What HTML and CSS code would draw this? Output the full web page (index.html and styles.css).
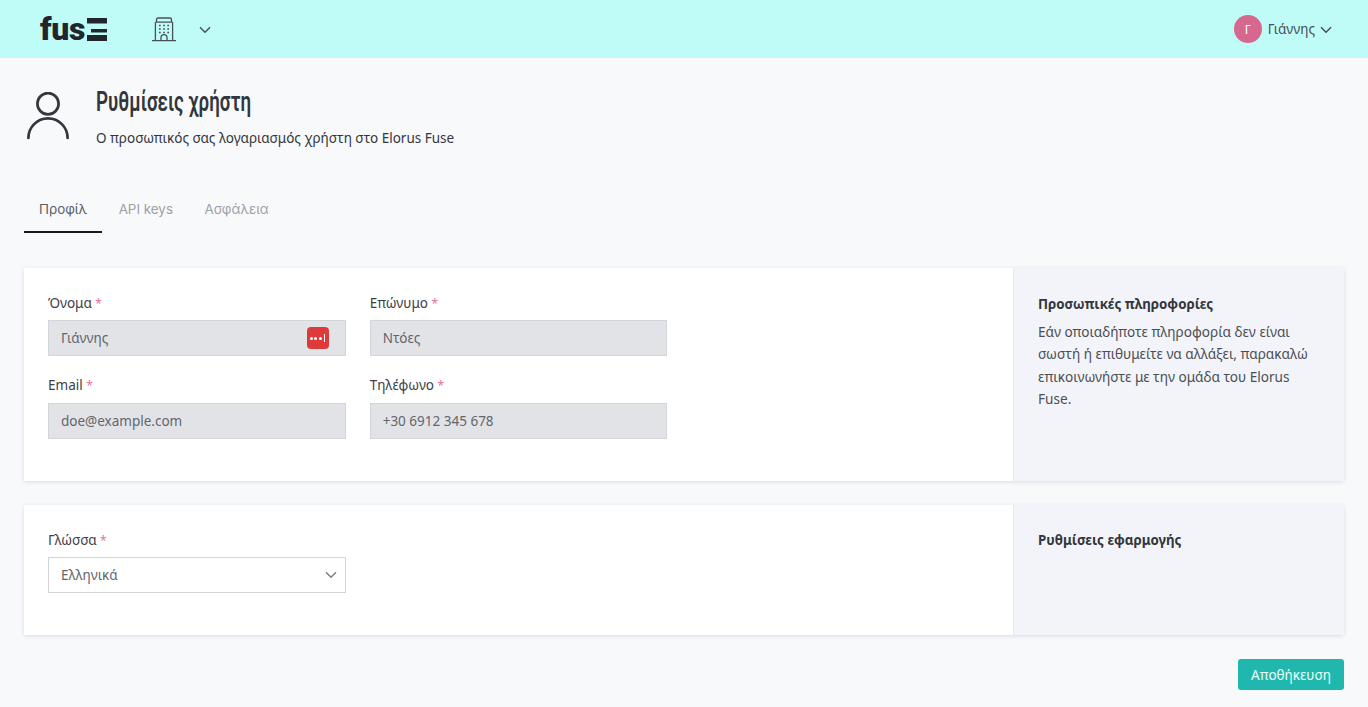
FILE: index.html
```html
<!DOCTYPE html>
<html lang="el">
<head>
<meta charset="utf-8">
<title>Ρυθμίσεις χρήστη</title>
<link rel="stylesheet" href="styles.css">
</head>
<body>
<header class="topbar">
  <div class="logo"><span class="logo-text">fus</span><svg class="logo-e" width="20" height="23" viewBox="0 0 20 23"><path d="M0 0h20v5.5H0zM4 11h16v3.5H4zM0 17h20v6H0z" fill="#22252b"/></svg></div>
  <svg class="building" width="24" height="25" viewBox="0 0 24 25" fill="none" stroke="#4a4f57" stroke-width="1.3">
    <path d="M0 23.6h24M3.4 23.6V5.2M20.6 23.6V5.2M3.4 5.2h17.2M4.5 5.2V2.6q0-1.6 1.6-1.6h11.8q1.6 0 1.6 1.6v2.6"/>
    <path d="M9 23.6v-3a3 3 0 0 1 6 0v3"/>
    <path d="M7 8.5h1.7M11.2 8.5h1.7M15.3 8.5H17M7 12h1.7M11.2 12h1.7M15.3 12H17M7 15.5h1.7M11.2 15.5h1.7M15.3 15.5H17" stroke-width="1.7"/>
  </svg>
  <svg class="caret caret-org" width="12" height="8" viewBox="0 0 12 8" fill="none" stroke="#4a4f57" stroke-width="1.5"><path d="M1 1.2l5 5 5-5"/></svg>
  <div class="user">
    <span class="avatar">Γ</span>
    <span class="user-name">Γιάννης</span>
    <svg class="caret" width="12" height="8" viewBox="0 0 12 8" fill="none" stroke="#4a4f57" stroke-width="1.5"><path d="M1 1.2l5 5 5-5"/></svg>
  </div>
</header>
<main class="page">
  <section class="page-head">
    <svg class="user-icon" width="46" height="50" viewBox="0 0 46 50" fill="none" stroke="#33363c" stroke-width="2.7" stroke-linecap="round"><circle cx="24" cy="11.7" r="10.6"/><path d="M4.4 46a19.6 19.6 0 0 1 39.2 0"/></svg>
    <div class="head-text">
      <h1 class="title">Ρυθμίσεις χρήστη</h1>
      <p class="subtitle">Ο προσωπικός σας λογαριασμός χρήστη στο Elorus Fuse</p>
    </div>
  </section>
  <nav class="tabs">
    <a class="tab tab-active">Προφίλ</a>
    <a class="tab">API keys</a>
    <a class="tab">Ασφάλεια</a>
  </nav>
  <section class="card">
    <div class="card-main">
      <div class="form-grid">
        <div class="field">
          <label class="label">Όνομα <span class="req">*</span></label>
          <div class="input input-disabled">Γιάννης
            <span class="pw-badge"><i></i><i></i><i></i><b></b></span>
          </div>
        </div>
        <div class="field">
          <label class="label">Επώνυμο <span class="req">*</span></label>
          <div class="input input-disabled">Ντόες</div>
        </div>
        <div class="field field-start">
          <label class="label">Email <span class="req">*</span></label>
          <div class="input input-disabled">doe@example.com</div>
        </div>
        <div class="field">
          <label class="label">Τηλέφωνο <span class="req">*</span></label>
          <div class="input input-disabled">+30 6912 345 678</div>
        </div>
      </div>
    </div>
    <aside class="card-side">
      <h2 class="side-title">Προσωπικές πληροφορίες</h2>
      <p class="side-text">Εάν οποιαδήποτε πληροφορία δεν είναι σωστή ή επιθυμείτε να αλλάξει, παρακαλώ επικοινωνήστε με την ομάδα του Elorus Fuse.</p>
    </aside>
  </section>
  <section class="card">
    <div class="card-main">
      <div class="form-grid">
        <div class="field">
          <label class="label">Γλώσσα <span class="req">*</span></label>
          <div class="input input-select">Ελληνικά
            <svg width="12" height="8" viewBox="0 0 12 8" fill="none" stroke="#777b82" stroke-width="1.4"><path d="M1 1.2l5 5 5-5"/></svg>
          </div>
        </div>
      </div>
    </div>
    <aside class="card-side card-side-short">
      <h2 class="side-title">Ρυθμίσεις εφαρμογής</h2>
    </aside>
  </section>
  <div class="actions"><button class="btn-save" type="button">Αποθήκευση</button></div>
</main>
</body>
</html>
```
FILE: styles.css
```css
* { box-sizing: border-box; }
html, body { margin: 0; height: 100%; }
body {
  background: #f8f9fb;
  color: #33363c;
  font-family: "Noto Sans", Roboto, sans-serif;
  font-size: 13.5px;
  overflow: hidden;
}
.topbar {
  height: 58px;
  background: #bffcf8;
  display: flex;
  align-items: center;
  padding: 0 36px 0 40px;
}
.logo { display: flex; align-items: center; width: 112px; }
.logo-text {
  font-family: Roboto, sans-serif;
  font-weight: 900;
  font-size: 32px;
  line-height: 30px;
  letter-spacing: -0.3px;
  color: #22252b;
}
.logo-e { margin-left: 2px; }
.caret-org { margin-left: 23px; margin-top: 1px; }
.user { margin-left: auto; display: flex; align-items: center; }
.user .caret { margin-top: 1px; }
.avatar {
  width: 28px; height: 28px; border-radius: 50%;
  background: #d6688f; color: #fff;
  font-size: 12px;
  display: flex; align-items: center; justify-content: center;
}
.user-name { margin-left: 6px; margin-right: 5px; color: #4a4f57; }
.page { padding: 0 24px; }
.page-head { display: flex; padding-top: 34px; height: 118px; }
.head-text { margin-left: 26px; }
.title {
  margin: -2px 0 0;
  font-family: Roboto, sans-serif;
  font-size: 27px;
  line-height: 24px;
  font-weight: 600;
  color: #33363c;
  transform: scaleX(0.695);
  transform-origin: left center;
  white-space: nowrap;
}
.subtitle { margin: 13px 0 0; line-height: 22px; }
.tabs { display: flex; height: 42px; margin-top: 15px; }
.tab {
  padding: 7px 14.5px 0 15px; color: #9ea1a7; line-height: 22px; height: 42px; margin-right: 2px;
  font-family: Inter, sans-serif; font-size: 13.4px;
}
.tab-active { color: #5a5e65; border-bottom: 2px solid #17191d; }
.card {
  display: flex;
  margin-top: 24px;
  box-shadow: 0 1px 4px rgba(40, 50, 70, 0.14);
  background: #fff;
}
.page > .tabs + .card { margin-top: 35px; }
.card-main { flex: 1; padding: 24px 24px 42px; }
.card-side {
  width: 331px;
  padding: 24px;
  background: #f3f4f9;
  border-left: 1px solid #e8e9ee;
}
.card-side-short { padding-top: 23px; }
.form-grid { display: grid; grid-template-columns: repeat(3, 1fr); column-gap: 24px; row-gap: 19px; }
.form-grid .field-start { grid-column: 1; }
.label { display: block; line-height: 22px; height: 22px; margin-bottom: 6px; color: #3d4046; }
.field:nth-child(n+3) .label { margin-top: -1px; margin-bottom: 7px; }
.req { color: #e8709a; font-size: 12px; line-height: 1; }
.input {
  height: 36px;
  padding: 0 12px;
  border: 1px solid #d3d5da;
  display: flex; align-items: center; justify-content: space-between;
  color: #62666d;
}
.input-disabled { background: #e2e3e7; }
.input-select { background: #fff; padding-right: 8px; }
.pw-badge {
  width: 22px; height: 22px; border-radius: 4px;
  background: #dd3b3b;
  display: flex; align-items: center; justify-content: center; gap: 1.5px;
  margin-right: 4px;
}
.pw-badge i { width: 3px; height: 3px; border-radius: 50%; background: #fff; }
.pw-badge b { width: 1px; height: 8px; background: #fff; margin-left: 1px; }
.side-title { margin: 0; font-size: 13.3px; line-height: 24px; font-weight: 700; color: #33363c; }
.side-text { margin: 5px 0 0; font-size: 13.6px; line-height: 22.4px; color: #4a4e55; }
.actions { display: flex; justify-content: flex-end; margin-top: 24px; }
.btn-save {
  width: 106px; height: 31px;
  background: #20b8ae;
  border: 0; border-radius: 3px;
  color: #eafffb;
  font: inherit;
  padding: 0;
}
```
